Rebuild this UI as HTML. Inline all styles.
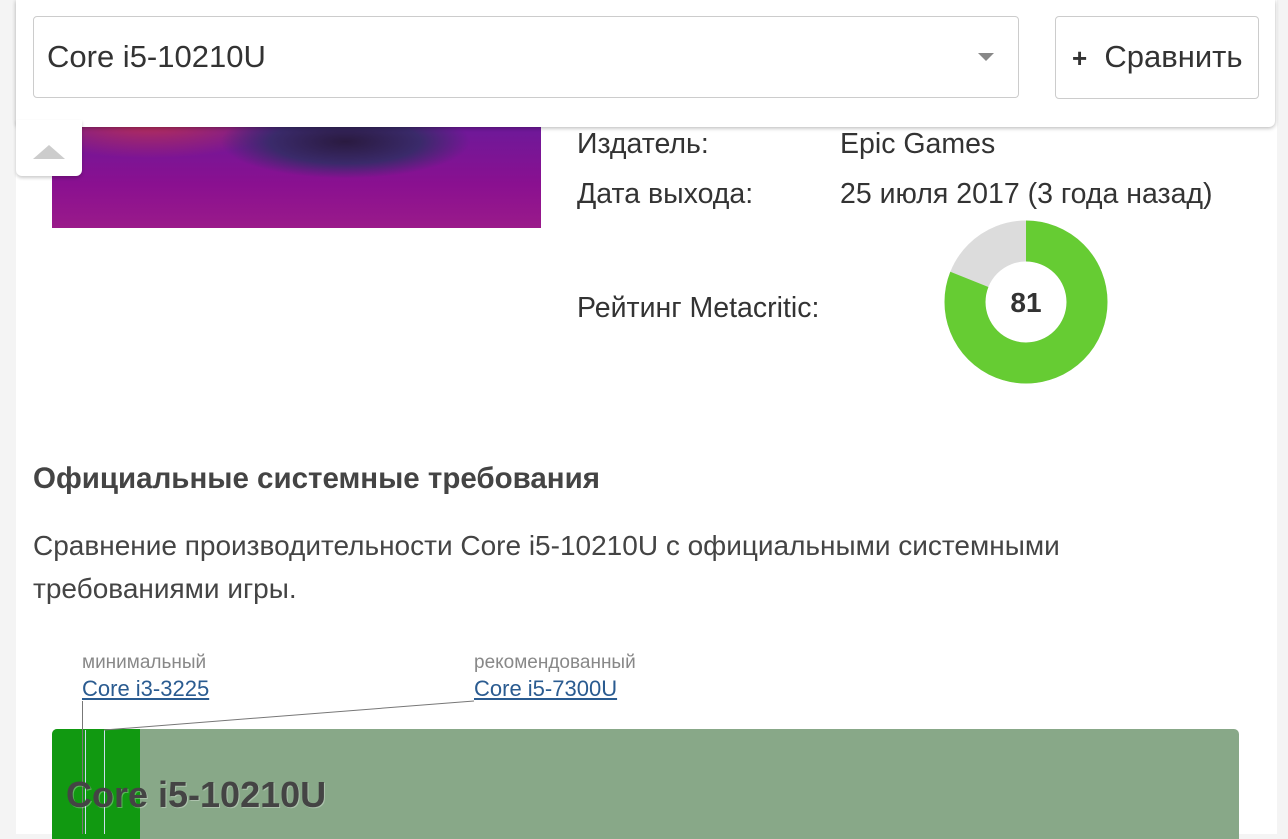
<!DOCTYPE html>
<html><head><meta charset="utf-8"><style>
body{margin:0;width:1288px;height:834px;overflow:hidden;background:#f4f4f4;font-family:"Liberation Sans",sans-serif;color:#333;position:relative}
.main{position:absolute;left:16px;top:0;width:1261px;height:834px;background:#fff}
.abs{position:absolute;white-space:nowrap}
.img{position:absolute;left:52px;top:120px;width:489px;height:108px;background:radial-gradient(ellipse at 60% 20%,#2a1a40 0,#3a2a6a 18%,transparent 30%),radial-gradient(ellipse at 20% 0%,#c03050 0,transparent 25%),linear-gradient(180deg,#6a1a9a,#8a1090 60%,#9a1a8a);}
.panel{position:absolute;left:16px;top:0;width:1259px;height:127px;background:#fff;border-radius:0 0 6px 6px;box-shadow:0 1px 4px rgba(0,0,0,.3)}
.tab{position:absolute;left:16px;top:120px;width:66px;height:56px;background:#fff;border-radius:0 0 6px 6px;box-shadow:0 2px 3px rgba(0,0,0,.2)}
.sel{position:absolute;left:33px;top:16px;width:986px;height:82px;border:1px solid #ccc;border-radius:4px;box-sizing:border-box;font-size:31px;line-height:80px;padding-left:13px;color:#333}
.btn{position:absolute;left:1055px;top:16px;width:204px;height:83px;border:1px solid #ccc;border-radius:4px;box-sizing:border-box;font-size:31px;line-height:80px;padding-left:16px;color:#333}
a{color:#2a5b90;text-decoration:underline}
.t{font-size:28.5px}
</style></head><body>
<div class="main"></div>
<div class="img"></div>
<div class="abs t" style="left:577px;top:128px">Издатель:</div>
<div class="abs t" style="left:840px;top:128px">Epic Games</div>
<div class="abs t" style="left:577px;top:178px">Дата выхода:</div>
<div class="abs t" style="left:840px;top:178px">25 июля 2017 (3 года назад)</div>
<div class="abs t" style="left:577px;top:292px">Рейтинг Metacritic:</div>
<svg class="abs" style="left:944px;top:220px" width="164" height="164" viewBox="-82 -82 164 164">
<circle r="61" fill="none" stroke="#dcdcdc" stroke-width="41"/>
<circle r="61" fill="none" stroke="#66cc33" stroke-width="41" stroke-dasharray="310.5 400" transform="rotate(-90)"/>
<text x="0" y="10" text-anchor="middle" font-size="28" font-weight="bold" fill="#333" font-family="Liberation Sans">81</text>
</svg>
<div class="abs" style="left:33px;top:462px;font-size:29.5px;font-weight:bold;color:#444">Официальные системные требования</div>
<div class="abs" style="left:33px;top:524px;font-size:28px;line-height:43px;white-space:normal;width:1100px;color:#444">Сравнение производительности Core i5-10210U с официальными системными требованиями игры.</div>
<div class="abs" style="left:82px;top:652px;font-size:19px;color:#888">минимальный</div>
<div class="abs" style="left:82px;top:676px;font-size:22px"><a>Core i3-3225</a></div>
<div class="abs" style="left:474px;top:652px;font-size:19px;color:#888">рекомендованный</div>
<div class="abs" style="left:474px;top:676px;font-size:22px"><a>Core i5-7300U</a></div>
<div class="abs" style="left:52px;top:729px;width:1187px;height:110px;background:#88a888;border-radius:5px 5px 0 0"></div>
<div class="abs" style="left:52px;top:729px;width:88px;height:110px;background:#119911;border-radius:5px 0 0 0"></div>
<svg class="abs" style="left:0;top:690px" width="700" height="144">
<line x1="82.5" y1="11" x2="82.5" y2="144" stroke="#777"/>
<line x1="85.5" y1="40" x2="85.5" y2="144" stroke="#cde"/>
<line x1="104.5" y1="40" x2="104.5" y2="144" stroke="#cde"/>
<line x1="474" y1="11" x2="104" y2="40" stroke="#777"/>
</svg>
<div class="abs" style="left:66px;top:774px;font-size:36px;font-weight:bold;color:#444;text-shadow:1px 1px 0 rgba(255,255,255,.3)">Core i5-10210U</div>
<div class="panel"></div>
<div class="tab"></div>
<div class="abs" style="left:33px;top:145px;width:0;height:0;border-left:16px solid transparent;border-right:16px solid transparent;border-bottom:14px solid #ccc"></div>
<div class="sel">Core i5-10210U<span class="abs" style="left:944px;top:36px;width:0;height:0;border-left:8px solid transparent;border-right:8px solid transparent;border-top:8px solid #888"></span></div>
<div class="btn"><b style="font-size:26px">+</b>&nbsp; Сравнить</div>
</body></html>
